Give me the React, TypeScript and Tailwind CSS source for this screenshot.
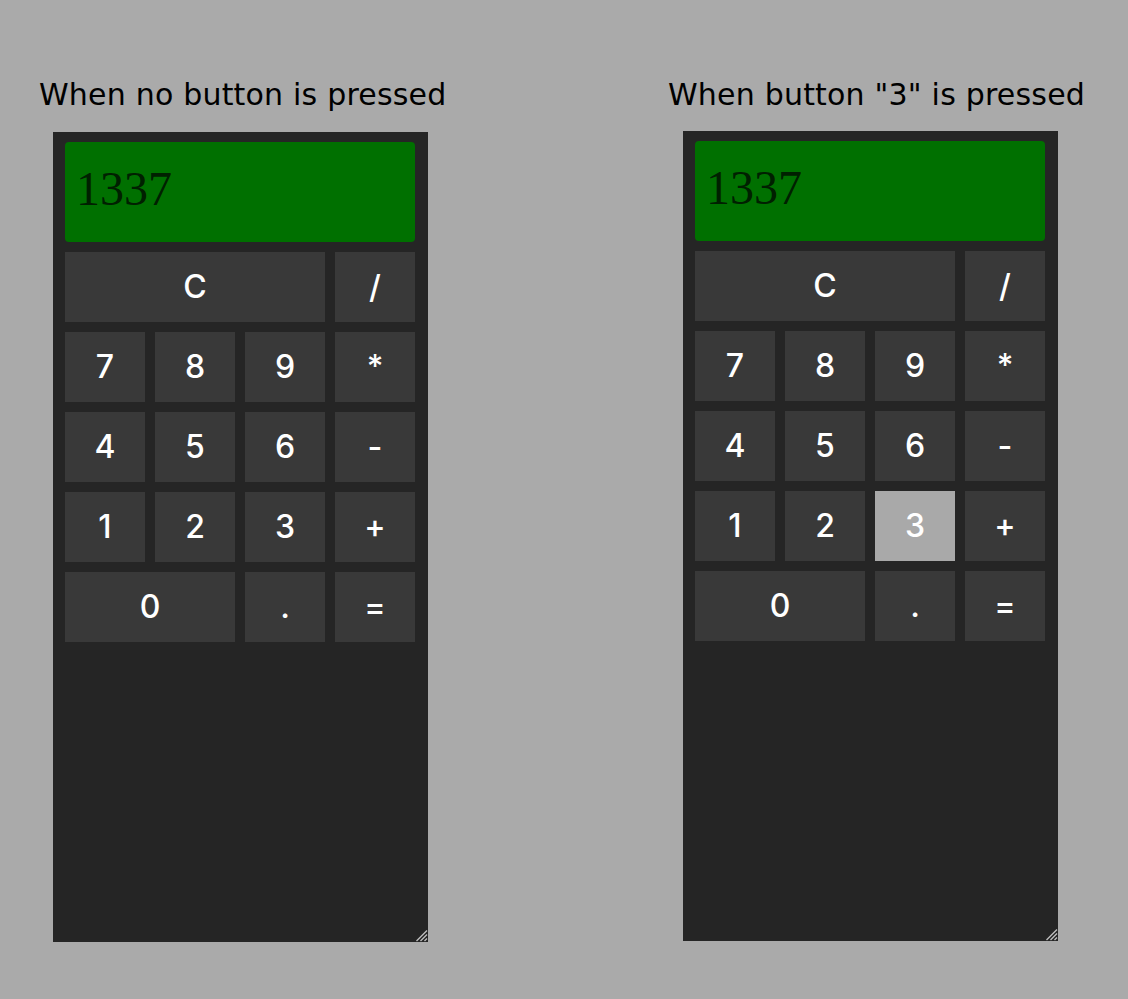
const keys: { label: string; span?: string }[] = [
  { label: "C", span: "col-span-3" },
  { label: "/" },
  { label: "7" },
  { label: "8" },
  { label: "9" },
  { label: "*" },
  { label: "4" },
  { label: "5" },
  { label: "6" },
  { label: "-" },
  { label: "1" },
  { label: "2" },
  { label: "3" },
  { label: "+" },
  { label: "0", span: "col-span-2" },
  { label: "." },
  { label: "=" },
]

function ResizeGrip() {
  return (
    <svg className="absolute right-0 bottom-0 w-[14px] h-[14px]" viewBox="0 0 14 14">
      <path d="M13 2.5 L2.5 13 M13 6.5 L6.5 13 M13 10.5 L10.5 13" stroke="#bdbdbd" strokeWidth={1.4} fill="none" />
    </svg>
  )
}

function Calculator({ pressed, className }: { pressed?: string; className: string }) {
  return (
    <div className={`relative w-[375px] h-[810px] bg-[#252525] pt-[10px] px-[12px] ${className}`}>
      <div className="w-[350px] h-[100px] rounded-[4px] bg-[#007000] flex items-center pl-[11px] pb-[6px]">
        <span className="text-[48px] leading-none text-[#002000] font-['Liberation_Serif',serif]">1337</span>
      </div>
      <div className="w-[350px] mt-[10px] grid grid-cols-4 gap-[10px] auto-rows-[70px]">
        {keys.map((k) => (
          <div
            key={k.label}
            className={`flex items-center justify-center text-white text-[32px] font-medium font-['Inter',sans-serif] ${
              k.span ?? ""
            } ${pressed === k.label ? "bg-[#a9a9a9]" : "bg-[#393939]"}`}
          >
            {k.label}
          </div>
        ))}
      </div>
      <ResizeGrip />
    </div>
  )
}

export default function App() {
  return (
    <div className="min-h-[999px] bg-[#aaaaaa] flex pl-[39px] pt-[77px] font-['DejaVu_Sans',sans-serif]">
      <div className="w-[629px] flex flex-col">
        <h2 className="text-[30px] leading-[35px] tracking-[0.2px] text-black">When no button is pressed</h2>
        <Calculator className="ml-[14px] mt-[20px]" />
      </div>
      <div className="flex flex-col">
        <h2 className="text-[30px] leading-[35px] tracking-[0.2px] text-black">When button "3" is pressed</h2>
        <Calculator pressed="3" className="ml-[15px] mt-[19px]" />
      </div>
    </div>
  )
}
